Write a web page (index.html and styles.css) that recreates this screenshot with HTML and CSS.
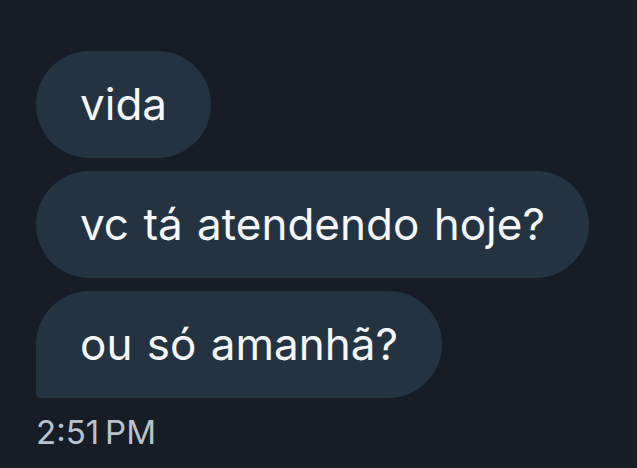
FILE: index.html
```html
<!DOCTYPE html>
<html lang="pt">
<head>
<meta charset="utf-8">
<link rel="stylesheet" href="styles.css">
</head>
<body>
<div class="thread">
  <div class="group">
    <div class="bubble">vida</div>
    <div class="bubble">vc tá atendendo hoje?</div>
    <div class="bubble last">ou só amanhã?</div>
  </div>
  <div class="time">2:51&#8201;PM</div>
</div>
</body>
</html>
```
FILE: styles.css
```css
html, body {
  margin: 0;
  padding: 0;
  background: #161d27;
  height: 100%;
}
body {
  font-family: Inter, "Noto Sans", sans-serif;
  overflow: hidden;
}
.thread {
  padding: 51px 0 0 36px;
  display: flex;
  flex-direction: column;
  align-items: flex-start;
}
.group {
  display: flex;
  flex-direction: column;
  align-items: flex-start;
  gap: 13px;
}
.bubble {
  background: #243342;
  color: #f5f8fa;
  font-size: 44px;
  line-height: 53px;
  word-spacing: 2px;
  padding: 27px 44px;
  border-radius: 54px;
}
.bubble.last {
  border-bottom-left-radius: 4px;
}
.time {
  margin-top: 14px;
  color: #b8c3cd;
  font-size: 33px;
  line-height: 40px;
}
```
